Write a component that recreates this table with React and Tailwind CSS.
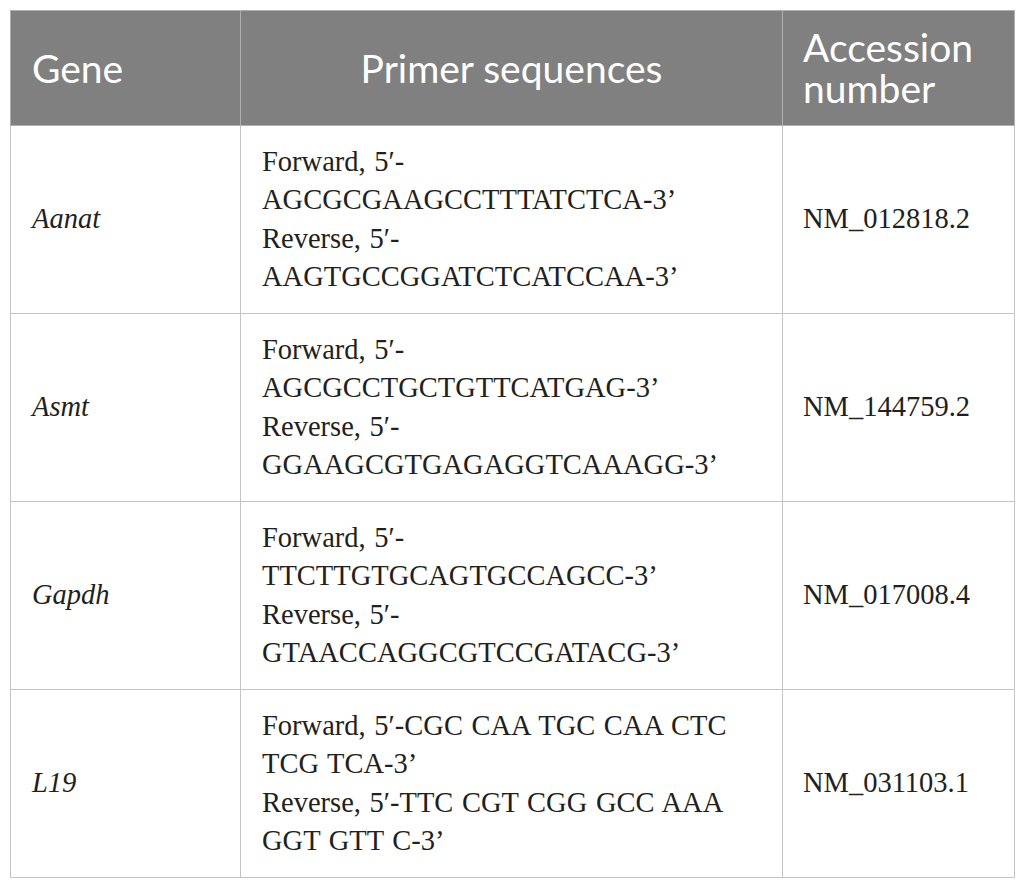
import React from "react";

const rows = [
  {
    gene: "Aanat",
    lines: ["Forward, 5′-", "AGCGCGAAGCCTTTATCTCA-3’", "Reverse, 5′-", "AAGTGCCGGATCTCATCCAA-3’"],
    acc: "NM_012818.2",
  },
  {
    gene: "Asmt",
    lines: ["Forward, 5′-", "AGCGCCTGCTGTTCATGAG-3’", "Reverse, 5′-", "GGAAGCGTGAGAGGTCAAAGG-3’"],
    acc: "NM_144759.2",
  },
  {
    gene: "Gapdh",
    lines: ["Forward, 5′-", "TTCTTGTGCAGTGCCAGCC-3’", "Reverse, 5′-", "GTAACCAGGCGTCCGATACG-3’"],
    acc: "NM_017008.4",
  },
  {
    gene: "L19",
    lines: ["Forward, 5′-CGC CAA TGC CAA CTC", "TCG TCA-3’", "Reverse, 5′-TTC CGT CGG GCC AAA", "GGT GTT C-3’"],
    acc: "NM_031103.1",
  },
];

export default function App() {
  return (
    <div className="bg-white w-[1025px] h-[889px] pt-[10px] pl-[10px]">
      <table className="border-collapse table-fixed w-[1004px] border border-[#c4c4c4]">
        <colgroup>
          <col className="w-[230px]" />
          <col className="w-[542px]" />
          <col className="w-[232px]" />
        </colgroup>
        <thead>
          <tr className="h-[115px] bg-[#808080] text-white text-[39px] leading-[41px] font-['Lato','Open_Sans',sans-serif]">
            <th className="font-normal text-left align-middle pl-[21px] border border-[#b0b0b0]">Gene</th>
            <th className="font-normal text-center align-middle border border-[#b0b0b0]">Primer sequences</th>
            <th className="font-normal text-left align-middle pl-[20px] border border-[#b0b0b0]">
              Accession
              <br />
              number
            </th>
          </tr>
        </thead>
        <tbody className="font-['Liberation_Serif','Times_New_Roman',serif] text-[#231f20] text-[28.5px] leading-[38.5px] [word-spacing:1.5px]">
          {rows.map((r) => (
            <tr key={r.gene} className="h-[188px]">
              <td className="align-middle pl-[21px] italic border border-[#c4c4c4]">{r.gene}</td>
              <td className="align-middle pl-[21px] border border-[#c4c4c4] whitespace-nowrap">
                {r.lines.map((l, i) => (
                  <div key={i}>{l}</div>
                ))}
              </td>
              <td className="align-middle pl-[20px] border border-[#c4c4c4]">{r.acc}</td>
            </tr>
          ))}
        </tbody>
      </table>
    </div>
  );
}
